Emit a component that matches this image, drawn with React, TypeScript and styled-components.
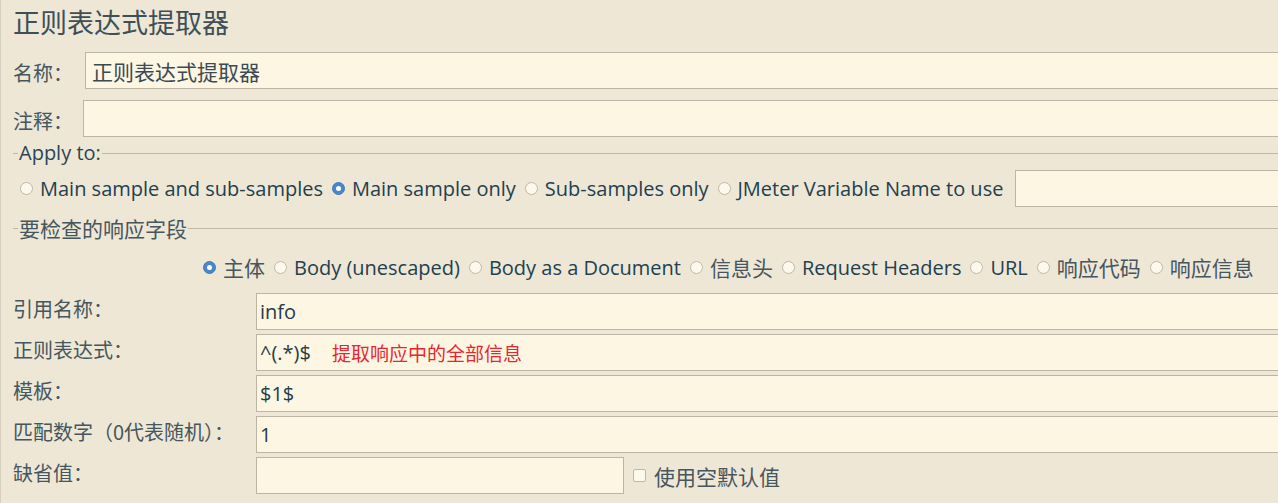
import React from "react";
import styled, { createGlobalStyle } from "styled-components";

const GlobalStyle = createGlobalStyle`
  html, body { margin: 0; padding: 0; background: #eee7d6; overflow: hidden; }
  body { font-family: "Noto Sans CJK SC", sans-serif; color: #2c4454; }
`;

const Page = styled.div`
  width: 1278px;
  height: 503px;
  box-sizing: border-box;
  border-left: 1px solid #d8d0bf;
  overflow: hidden;
  display: flex;
  flex-direction: column;
`;

const Title = styled.div`
  height: 52px;
  box-sizing: border-box;
  padding: 5px 0 0 12px;
  font-size: 27px;
  line-height: 34px;
  color: #3f4f57;
`;

const FieldRow = styled.div<{ $top?: number }>`
  display: flex;
  align-items: center;
  height: 37px;
  margin-top: ${(p) => p.$top ?? 0}px;
  padding-left: 12px;
`;

const Label = styled.div<{ $w: number; $dy?: number }>`
  width: ${(p) => p.$w}px;
  flex: none;
  font-size: 20px;
  line-height: 24px;
  color: #45565e;
  white-space: nowrap;
  position: relative;
  top: ${(p) => p.$dy ?? 0}px;
`;

const Input = styled.div<{ $w?: number; $open?: boolean; $gap?: number }>`
  box-sizing: border-box;
  height: 37px;
  ${(p) => (p.$w ? `width: ${p.$w}px; flex: none;` : "flex: 1;")}
  margin-left: ${(p) => p.$gap ?? 0}px;
  background: #fdf6e3;
  border: 1px solid #bcb4a5;
  ${(p) => (p.$open ? "border-right: none;" : "")}
  display: flex;
  align-items: center;
  padding-left: 3px;
  font-size: 20px;
  color: #263b48;
  white-space: nowrap;
  font-family: "Open Sans", "Noto Sans CJK SC", sans-serif;
`;

const CjkValue = styled.span`
  font-family: "Noto Sans CJK SC", sans-serif;
  font-size: 21px;
  color: #3a4b53;
  padding-left: 3px;
`;

const Hint = styled.span`
  margin-left: 21px;
  color: #e8262e;
  font-size: 19px;
  font-family: "Noto Sans CJK SC", sans-serif;
`;

const LegendRow = styled.div<{ $top: number }>`
  display: flex;
  align-items: center;
  height: 22px;
  margin-top: ${(p) => p.$top}px;
  padding-left: 12px;
`;

const Rule = styled.div<{ $w?: number }>`
  height: 1px;
  background: #c0b8a8;
  ${(p) => (p.$w ? `width: ${p.$w}px; flex: none;` : "flex: 1;")}
`;

const LegendText = styled.span<{ $cjk?: boolean }>`
  padding: 0 1px;
  font-size: ${(p) => (p.$cjk ? 21 : 20)}px;
  line-height: 22px;
  font-family: ${(p) =>
    p.$cjk ? `"Noto Sans CJK SC", sans-serif` : `"Open Sans", "Noto Sans CJK SC", sans-serif`};
  color: ${(p) => (p.$cjk ? "#45565e" : "#2a4656")};
`;

const RadioRow = styled.div<{ $top: number; $left: number; $h: number }>`
  display: flex;
  align-items: center;
  height: ${(p) => p.$h}px;
  margin-top: ${(p) => p.$top}px;
  padding-left: ${(p) => p.$left}px;
  gap: 9px;
`;

const RadioItem = styled.label`
  display: flex;
  align-items: center;
  gap: 7px;
  white-space: nowrap;
`;

const RadioDot = styled.span<{ $on?: boolean }>`
  width: 13px;
  height: 13px;
  box-sizing: border-box;
  border-radius: 50%;
  flex: none;
  border: 1px solid ${(p) => (p.$on ? "#3f7bbd" : "#bfb8aa")};
  background: ${(p) => (p.$on ? "#4a87c8" : "#fdf8ec")};
  display: flex;
  align-items: center;
  justify-content: center;
  &::after {
    content: "";
    display: ${(p) => (p.$on ? "block" : "none")};
    width: 5px;
    height: 5px;
    border-radius: 50%;
    background: #ffffff;
  }
`;

const RadioText = styled.span<{ $cjk?: boolean }>`
  font-size: ${(p) => (p.$cjk ? 21 : 20)}px;
  font-family: ${(p) =>
    p.$cjk ? `"Noto Sans CJK SC", sans-serif` : `"Open Sans", "Noto Sans CJK SC", sans-serif`};
  color: ${(p) => (p.$cjk ? "#45565e" : "#22404f")};
`;

const Form = styled.div`
  display: grid;
  grid-template-columns: 243px 1fr;
  grid-auto-rows: 37px;
  row-gap: 4px;
  margin-top: 11px;
  padding-left: 12px;
  align-items: center;
`;

const FormLabel = styled.div`
  font-size: 20px;
  line-height: 24px;
  color: #45565e;
  white-space: nowrap;
  align-self: center;
  position: relative;
  top: -3px;
`;

const Cell = styled.div`
  display: flex;
  align-items: center;
  height: 37px;
`;

const Check = styled.span`
  width: 13px;
  height: 13px;
  box-sizing: border-box;
  border: 1px solid #bfb8aa;
  border-radius: 2px;
  background: #fdf8ec;
  margin-left: 9px;
  margin-right: 8px;
  flex: none;
`;

const CheckText = styled.span`
  font-size: 21px;
  color: #45565e;
  white-space: nowrap;
`;

type Opt = { text: string; on?: boolean; cjk?: boolean };

const Radios = ({ items }: { items: Opt[] }) => (
  <>
    {items.map((o) => (
      <RadioItem key={o.text}>
        <RadioDot $on={o.on} />
        <RadioText $cjk={o.cjk}>{o.text}</RadioText>
      </RadioItem>
    ))}
  </>
);

export default function App() {
  return (
    <>
      <GlobalStyle />
      <Page>
        <Title>正则表达式提取器</Title>
        <FieldRow>
          <Label $w={72} $dy={2}>名称：</Label>
          <Input $open>
            <CjkValue>正则表达式提取器</CjkValue>
          </Input>
        </FieldRow>
        <FieldRow $top={11}>
          <Label $w={70} $dy={2}>注释：</Label>
          <Input $open />
        </FieldRow>

        <LegendRow $top={5}>
          <Rule $w={5} />
          <LegendText>Apply to:</LegendText>
          <Rule />
        </LegendRow>
        <RadioRow $top={6} $left={19} $h={37}>
          <Radios
            items={[
              { text: "Main sample and sub-samples" },
              { text: "Main sample only", on: true },
              { text: "Sub-samples only" },
              { text: "JMeter Variable Name to use" },
            ]}
          />
          <Input $open $gap={3} />
        </RadioRow>

        <LegendRow $top={10}>
          <Rule $w={5} />
          <LegendText $cjk>要检查的响应字段</LegendText>
          <Rule />
        </LegendRow>
        <RadioRow $top={13} $left={202} $h={30}>
          <Radios
            items={[
              { text: "主体", on: true, cjk: true },
              { text: "Body (unescaped)" },
              { text: "Body as a Document" },
              { text: "信息头", cjk: true },
              { text: "Request Headers" },
              { text: "URL" },
              { text: "响应代码", cjk: true },
              { text: "响应信息", cjk: true },
            ]}
          />
        </RadioRow>

        <Form>
          <FormLabel>引用名称：</FormLabel>
          <Input $open>info</Input>
          <FormLabel>正则表达式：</FormLabel>
          <Input $open>
            ^(.*)$<Hint>提取响应中的全部信息</Hint>
          </Input>
          <FormLabel>模板：</FormLabel>
          <Input $open>$1$</Input>
          <FormLabel>匹配数字（0代表随机）：</FormLabel>
          <Input $open>1</Input>
          <FormLabel>缺省值：</FormLabel>
          <Cell>
            <Input $w={368} />
            <Check />
            <CheckText>使用空默认值</CheckText>
          </Cell>
        </Form>
      </Page>
    </>
  );
}
